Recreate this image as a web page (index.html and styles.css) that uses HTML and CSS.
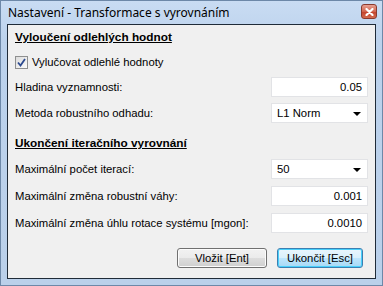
FILE: index.html
```html
<!DOCTYPE html>
<html lang="cs">
<head>
    <meta charset="UTF-8">
    <title>Nastavení - Transformace s vyrovnáním</title>
    <link rel="stylesheet" href="styles.css">
</head>
<body>
    <div class="window">
        <div class="titlebar">
            <span class="title">Nastavení - Transformace s vyrovnáním</span>
            <button class="close-btn" type="button" aria-label="Zavřít">
                <svg width="9" height="8" viewBox="0 0 9 8">
                    <path d="M1.5 1 L7.5 7 M7.5 1 L1.5 7" stroke="#fff" stroke-width="2.2" stroke-linecap="round"/>
                </svg>
            </button>
        </div>

        <div class="client">
            <h2 class="section-title">Vyloučení odlehlých hodnot</h2>

            <label class="check-row">
                <span class="checkbox">
                    <svg width="9" height="9" viewBox="0 0 9 9">
                        <path d="M1 4.5 L3.5 7.5 L8 1" fill="none" stroke="#2c4a8f" stroke-width="1.8"/>
                    </svg>
                </span>
                Vylučovat odlehlé hodnoty
            </label>

            <div class="field-row first">
                <span class="label">Hladina vyznamnosti:</span>
                <div class="textbox">0.05</div>
            </div>

            <div class="field-row">
                <span class="label">Metoda robustního odhadu:</span>
                <div class="combo">
                    <span>L1 Norm</span>
                    <span class="arrow"></span>
                </div>
            </div>

            <h2 class="section-title second">Ukončení iteračního vyrovnání</h2>

            <div class="field-row first-iter">
                <span class="label">Maximální počet iterací:</span>
                <div class="combo">
                    <span>50</span>
                    <span class="arrow"></span>
                </div>
            </div>

            <div class="field-row tight">
                <span class="label">Maximální změna robustní váhy:</span>
                <div class="textbox">0.001</div>
            </div>

            <div class="field-row tight">
                <span class="label">Maximální změna úhlu rotace systému [mgon]:</span>
                <div class="textbox">0.0010</div>
            </div>

            <div class="buttons">
                <button class="btn" type="button">Vložit [Ent]</button>
                <button class="btn btn-default" type="button">Ukončit [Esc]</button>
            </div>
        </div>
    </div>
</body>
</html>
```

FILE: styles.css
```css
* {
    margin: 0;
    padding: 0;
    box-sizing: border-box;
}

body {
    background-color: #fff;
    font-family: 'Liberation Sans', Arial, sans-serif;
    font-size: 11.3px;
    color: #000;
}

.window {
    width: 383px;
    height: 286px;
    background: linear-gradient(#c9dcf3, #bcd2ec 40px, #bad0ea);
    border: 1px solid #6d88a8;
    display: flex;
    flex-direction: column;
}

.titlebar {
    height: 23px;
    display: flex;
    align-items: center;
    justify-content: space-between;
    padding: 0 5px 0 7px;
}

.title {
    font-family: 'Noto Sans', sans-serif;
    font-size: 12px;
    color: #000;
    margin-top: -1px;
}

.close-btn {
    width: 16px;
    height: 15px;
    margin-top: -2px;
    border: 1px solid #8a3a2e;
    border-radius: 3px;
    background: linear-gradient(#e8a193, #d1654f 50%, #c4412b 51%, #d26a4f);
    display: flex;
    align-items: center;
    justify-content: center;
}

.client {
    flex: 1;
    margin: 0 6px 6px 6px;
    border: 1px solid #1f2b38;
    background-color: #f0f0f0;
    padding: 5px 7px 0 7px;
    display: flex;
    flex-direction: column;
}

.section-title {
    font-size: 11.8px;
    font-weight: 700;
    text-decoration: underline;
    line-height: 14px;
}

.section-title.second {
    margin-top: 13px;
}

.check-row {
    display: flex;
    align-items: center;
    gap: 4px;
    margin-top: 11px;
    line-height: 14px;
}

.checkbox {
    width: 13px;
    height: 13px;
    border: 1px solid #8e8f8f;
    background: linear-gradient(135deg, #dcdcdc, #fbfbfb);
    display: flex;
    align-items: center;
    justify-content: center;
}

.field-row {
    display: flex;
    justify-content: space-between;
    align-items: center;
    height: 20px;
    margin-top: 6px;
}

.field-row.first {
    margin-top: 8px;
}

.field-row.first-iter {
    margin-top: 9px;
}

.field-row.tight {
    margin-top: 7px;
}

.textbox,
.combo {
    width: 97px;
    height: 20px;
    background-color: #fff;
    border: 1px solid #e2e3e6;
    display: flex;
    align-items: center;
    padding: 0 5px;
}

.textbox {
    justify-content: flex-end;
}

.combo {
    justify-content: space-between;
    padding-right: 6px;
}

.arrow {
    width: 0;
    height: 0;
    border-left: 4px solid transparent;
    border-right: 4px solid transparent;
    border-top: 4px solid #000;
    margin-top: 2px;
}

.buttons {
    display: flex;
    justify-content: flex-end;
    gap: 10px;
    margin-top: 15px;
    padding-right: 5px;
}

.btn {
    width: 90px;
    height: 20px;
    font-family: 'Liberation Sans', Arial, sans-serif;
    font-size: 11.3px;
    color: #000;
    border: 1px solid #707070;
    border-radius: 3px;
    background: linear-gradient(#f2f2f2, #ebebeb 50%, #dddddd 51%, #cfcfcf);
    box-shadow: inset 0 0 0 1px #fcfcfc;
}

.btn-default {
    width: 86px;
    border-color: #3c7fb1;
    background: linear-gradient(#eaf6fd, #d9f0fc 50%, #bee6fd 51%, #a7d9f5);
    box-shadow: inset 0 0 0 1px #48d0fb;
}
```
